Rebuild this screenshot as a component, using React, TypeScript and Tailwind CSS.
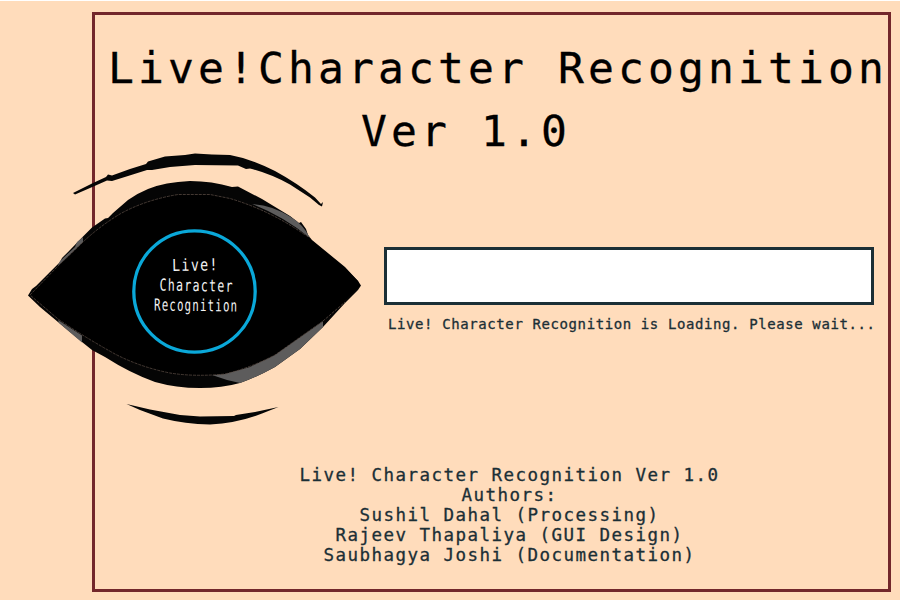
const mono = "font-['DejaVu_Sans_Mono',monospace]";

const credits = [
  "Live! Character Recognition Ver 1.0",
  "Authors:",
  "Sushil Dahal (Processing)",
  "Rajeev Thapaliya (GUI Design)",
  "Saubhagya Joshi (Documentation)",
];

function EyeLogo() {
  return (
    <svg
      className="pointer-events-none absolute left-0 top-0 font-['DejaVu_Sans_Mono',monospace]"
      width="380"
      height="440"
      viewBox="0 0 380 440"
    >
      {/* brow */}
      <path
        fill="#050606"
        d="M73 193 L92 183.500 L106 177 L108 174.500 L112 175.500 L130 169 L146 164 L148 161.500 L165 156.500 L185 155 L195 153.500 L212 154.500 L230 155 Q252 159 275 171 Q297 183 315 197.500 L321 204 L323 202 L322 206.500 L319 205 L310 197.500 L290 184.500 Q270 173.500 250 168.500 L246 169 L238 165.500 L195 165 L170 167 L152 170 L147 170 L128 176 L112 181 L107 180.500 L90 188 L75 194.500 Z"
      />
      {/* outer lids */}
      <path
        fill="#050505"
        d="M28 295.500 L32 289 L36 286 L50 272 L60 262 L62 258 L70 250 L83 236.500 L92 227.500 L105 218.500 L108 218 L113 213 L128 200 Q138 193 148 189 Q165 182 190 181 Q212 181 232 187 L238 186.500 L262 199 L290 216 L299 223 L301 222 L306 229 L308 235 L312 240 L345 267 L358 281 L361 285.500 L358 290 L345 303 L323 327 L300 349 L275 367 Q255 378 240 383 Q222 388 200 388 Q176 388 155 382 Q130 373 105 357 L92 350 L82 342 L58 322 L40 307 Z"
      />
      {/* grey highlights */}
      <path fill="#5d5c5c" d="M58 265.500 L60 261 L75 247 L77 242 L83 237 V245.500 L59 265 Z" />
      <path fill="#5d5c5c" d="M252 204 Q272 205 290 216.500 Q303 224 310 238 Q283 216 252 204 Z" />
      <path fill="#5d5c5c" d="M58 320 L82 335.500 V342.500 L59 323 Z" />
      <path
        fill="#5d5c5c"
        d="M212 375 Q230 373 250 367 Q279 352 323 321 V327 L300 349 L275 367 Q257 377 240 383 Q225 380 212 375 Z"
      />
      {/* eye body */}
      <path
        fill="#000"
        stroke="#564840"
        strokeWidth="0.8"
        strokeDasharray="3 1"
        d="M308 237 Q272 211 230 198.500 L210 194.500 L178 194.500 Q145 200 120 214 Q100 226 83 242 L58 266 L30 295 L58 319 Q81 335 115 354 Q140 367 170 373 Q195 377 225 374 Q250 368 275 355 L323 321 L345 302"
      />
      <path fill="#000" d="M305 235 L345 268 L358 281 L360 286 L345 300 L323 320 L290 340 Z" />
      <circle cx="194.500" cy="291.500" r="60.700" fill="#000" stroke="#0aa8d9" strokeWidth="3.300" />
      <g fill="#f4f4f4" fontSize="16.500">
        <text transform="translate(172.300 271) rotate(-1) scale(0.800 1)" letterSpacing="1.700">
          Live!
        </text>
        <text transform="translate(159.500 290.500) rotate(1) scale(0.700 1)" letterSpacing="1.850">
          Character
        </text>
        <text transform="translate(154 310.500) rotate(0.700) scale(0.650 1)" letterSpacing="1.850">
          Recognition
        </text>
      </g>
      {/* lower crease */}
      <path
        fill="#050606"
        d="M126.500 404 L150 409.500 L180 415 L200 416.500 L234 416 L236 415 L255 412 L278.500 407 L262 413.500 Q238 423 210 424.500 Q185 424 163 418.500 L140 410 Z"
      />
    </svg>
  );
}

export default function App() {
  return (
    <div
      className={`relative h-[600px] w-[900px] overflow-hidden border-t border-white bg-[#ffdcbb] pl-[92px] pt-[11px] ${mono}`}
    >
      <main className="flex h-[580px] w-[799px] flex-col border-[3px] border-[#73272b] pt-[22px]">
        <h1 className="whitespace-pre pl-[13px] text-[43px] leading-[63px] tracking-[4.110px] text-black [-webkit-text-stroke:0.3px_black]">
          <span className="block">Live!Character Recognition</span>
          <span className="block pl-[253px]">Ver 1.0</span>
        </h1>
        <section className="ml-[289px] mt-[84px] w-[490px]">
          <div className="h-[58px] border-[3px] border-[#1b2f36] bg-white" />
          <p className="mt-[9px] whitespace-pre pl-[4px] text-[14px] leading-5 tracking-[0.600px] text-[#1b2f36] [-webkit-text-stroke:0.3px_#1b2f36]">
            Live! Character Recognition is Loading. Please wait...
          </p>
        </section>
        <footer className="mt-[131px] pl-[36px] text-center text-[17.500px] leading-5 tracking-[1.465px] text-[#1b2f36] [-webkit-text-stroke:0.3px_#1b2f36]">
          {credits.map((line) => (
            <p key={line} className="whitespace-pre">
              {line}
            </p>
          ))}
        </footer>
      </main>
      <div className="absolute -top-px left-0">
        <EyeLogo />
      </div>
    </div>
  );
}
